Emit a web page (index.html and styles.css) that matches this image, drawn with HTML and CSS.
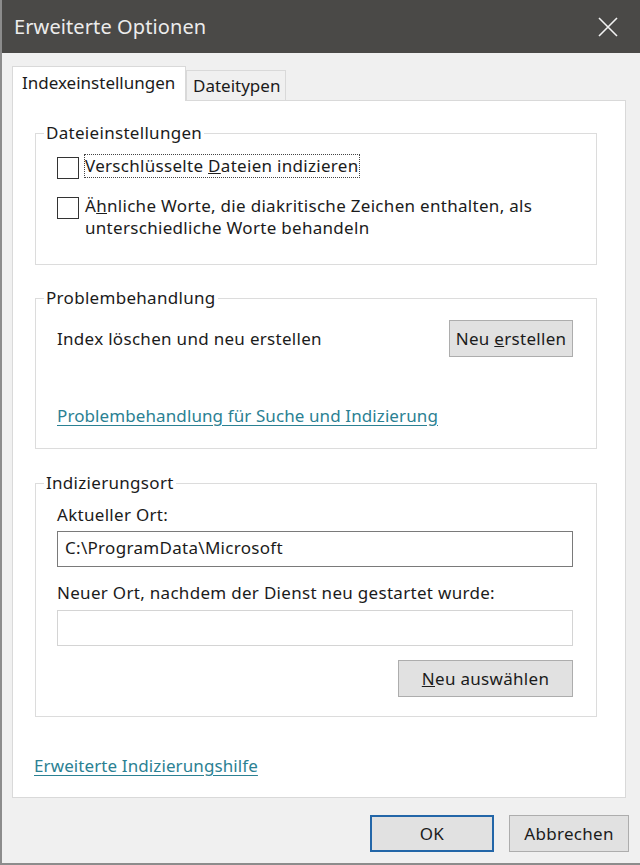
FILE: index.html
```html
<!DOCTYPE html>
<html lang="de">
<head>
<meta charset="utf-8">
<title>Erweiterte Optionen</title>
<link rel="stylesheet" href="styles.css">
</head>
<body>
<div class="window">
  <div class="titlebar">
    <span class="title">Erweiterte Optionen</span>
    <svg class="close" width="20" height="20" viewBox="0 0 20 20"><path d="M1 1 L19 19 M19 1 L1 19" stroke="#f2f2f2" stroke-width="1.6" fill="none"/></svg>
  </div>
  <div class="content">
    <div class="tabs">
      <div class="tab active">Indexeinstellungen</div>
      <div class="tab">Dateitypen</div>
    </div>
    <div class="panel">
      <fieldset class="group g1">
        <legend>Dateieinstellungen</legend>
        <div class="group-body">
          <div class="check-row">
            <span class="box"></span>
            <span class="label focus">Verschlüsselte <u>D</u>ateien indizieren</span>
          </div>
          <div class="check-row second">
            <span class="box"></span>
            <span class="label">Ä<u>h</u>nliche Worte, die diakritische Zeichen enthalten, als<br>unterschiedliche Worte behandeln</span>
          </div>
        </div>
      </fieldset>
      <fieldset class="group g2">
        <legend>Problembehandlung</legend>
        <div class="group-body">
          <div class="row-between">
            <span>Index löschen und neu erstellen</span>
            <button class="btn btn-rebuild">Neu <u>e</u>rstellen</button>
          </div>
          <a class="link trouble" href="#">Problembehandlung für Suche und Indizierung</a>
        </div>
      </fieldset>
      <fieldset class="group g3">
        <legend>Indizierungsort</legend>
        <div class="group-body">
          <div class="field-label">Aktueller Ort:</div>
          <div class="input">C:\ProgramData\Microsoft</div>
          <div class="field-label second">Neuer Ort, nachdem der Dienst neu gestartet wurde:</div>
          <div class="input empty"></div>
          <div class="row-end">
            <button class="btn btn-select"><u>N</u>eu auswählen</button>
          </div>
        </div>
      </fieldset>
      <a class="link help" href="#">Erweiterte Indizierungshilfe</a>
    </div>
    <div class="footer">
      <button class="btn btn-ok">OK</button>
      <button class="btn btn-cancel">Abbrechen</button>
    </div>
  </div>
</div>
</body>
</html>
```
FILE: styles.css
```css
html, body {
  margin: 0;
  padding: 0;
}
body {
  font-family: "Noto Sans", "Open Sans", sans-serif;
  font-size: 17px;
  letter-spacing: 0.3px;
  line-height: 22px;
  color: #1b1b1b;
  background: #f0f0f0;
}
.window {
  width: 640px;
  height: 865px;
  box-sizing: border-box;
  border-left: 2px solid #8c8c8c;
  border-bottom: 2px solid #8c8c8c;
  background: #f0f0f0;
  display: flex;
  flex-direction: column;
}
.titlebar {
  height: 53px;
  flex: none;
  background: #4a4947;
  display: flex;
  align-items: center;
  justify-content: space-between;
  padding: 0 22px 0 12px;
  color: #ececec;
}
.title {
  font-size: 20px;
  letter-spacing: 0.1px;
}
.close {
  display: block;
}
.content {
  padding: 13px 12px 0 10px;
  display: flex;
  flex-direction: column;
}
.tabs {
  display: flex;
  align-items: flex-end;
  height: 34px;
  position: relative;
  z-index: 1;
}
.tab {
  box-sizing: border-box;
  border: 1px solid #d9d9d9;
  border-bottom: none;
  background: #f0f0f0;
  height: 30px;
  padding: 0 5px 0 6px;
  line-height: 30px;
  letter-spacing: 0;
}
.tab.active {
  background: #ffffff;
  height: 35px;
  margin-bottom: -1px;
  padding: 0 9px 0 9px;
  line-height: 31px;
  width: 174px;
}
.panel {
  box-sizing: border-box;
  width: 614px;
  height: 698px;
  background: #ffffff;
  border: 1px solid #d9d9d9;
  padding: 21px 28px 0 21px;
  display: flex;
  flex-direction: column;
}
.group {
  margin: 0 0 0 1px;
  padding: 0;
  border: 1px solid #dcdcdc;
  min-width: 0;
}
.group legend {
  padding: 0 2px;
  margin-left: 8px;
  line-height: 22px;
}
.group-body {
  padding: 0 23px 0 21px;
}
.g1 .group-body {
  padding-top: 11px;
  padding-bottom: 25px;
}
.g2 {
  margin-top: 22px;
}
.g2 .group-body {
  padding-top: 11px;
  padding-bottom: 21px;
}
.g3 {
  margin-top: 23px;
}
.g3 .group-body {
  padding-top: 10px;
  padding-bottom: 19px;
}
.check-row {
  display: flex;
  align-items: flex-start;
}
.check-row.second {
  margin-top: 16px;
}
.box {
  box-sizing: border-box;
  width: 22px;
  height: 22px;
  border: 1px solid #333333;
  background: #ffffff;
  flex: none;
  margin-top: 2px;
  margin-right: 6px;
}
.label.focus {
  outline: 1px dotted #444444;
  outline-offset: 0;
}
.row-between {
  display: flex;
  align-items: center;
  justify-content: space-between;
}
.row-end {
  display: flex;
  justify-content: flex-end;
  margin-top: 14px;
}
.btn {
  font-family: inherit;
  font-size: 17px;
  letter-spacing: 0.3px;
  color: #1b1b1b;
  box-sizing: border-box;
  height: 37px;
  background: #e1e1e1;
  border: 1px solid #adadad;
  padding: 0;
  margin: 0;
}
.btn-rebuild {
  width: 124px;
}
.btn-select {
  width: 175px;
}
.link {
  color: #2b8193;
  text-decoration: underline;
  text-underline-offset: 3px;
  align-self: flex-start;
  letter-spacing: 0.1px;
}
.trouble {
  display: inline-block;
  margin-top: 48px;
}
.field-label.second {
  margin-top: 15px;
}
.input {
  box-sizing: border-box;
  height: 36px;
  border: 1px solid #7a7a7a;
  background: #ffffff;
  margin-top: 5px;
  padding: 0 7px;
  line-height: 32px;
}
.input.empty {
  border-color: #d4d4d4;
  margin-top: 6px;
}
.help {
  margin-top: 38px;
  margin-left: 0;
}
.footer {
  display: flex;
  justify-content: flex-end;
  gap: 15px;
  margin-top: 17px;
  margin-right: -1px;
}
.btn-ok {
  width: 124px;
  border: 2px solid #2366a8;
}
.btn-cancel {
  width: 120px;
}
```
